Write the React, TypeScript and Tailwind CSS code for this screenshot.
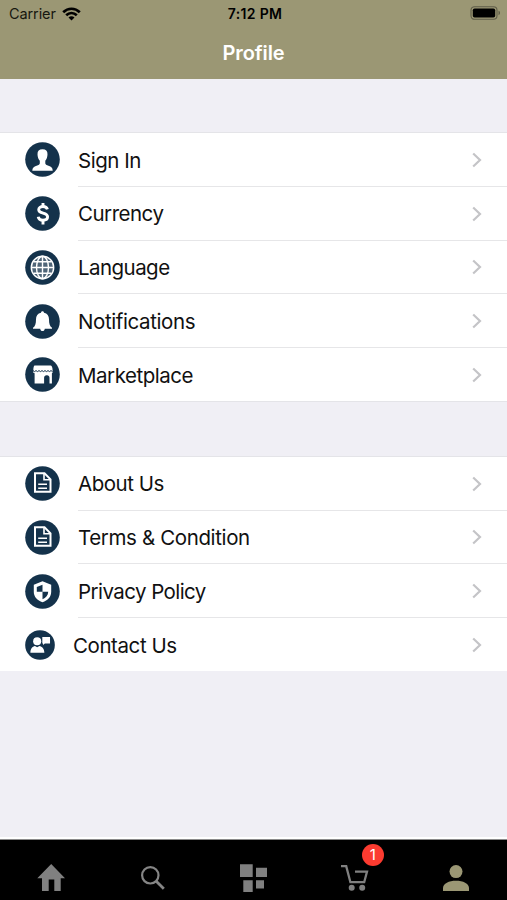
import React from 'react';

interface MenuItem {
    label: string;
    icon: React.ReactNode;
    compact?: boolean;
    tracking: string;
}

const NAVY = '#14324b';

const Disc = ({ children }: { children: React.ReactNode }) => (
    <svg viewBox="0 0 35 35" className="block h-full w-full" fill="none">
        <circle cx="17.5" cy="17.5" r="17.3" fill={NAVY} />
        {children}
    </svg>
);

const SignInIcon = () => (
    <Disc>
        <path
            fill="#fff"
            d="M17.5 7.2c3.4 0 5.1 1.8 5 5 0 2.500-.9 5-2.200 6.600v2.500c0 1.300 1.200 1.900 3.200 2.500 2.800.8 4.200 2 4.200 5h-20.400c.1-3 1.500-4.200 4.300-5 2-.6 3.200-1.200 3.200-2.500v-2.500c-1.400-1.600-2.300-4.100-2.300-6.600-.1-3.200 1.600-5 5-5z"
        />
    </Disc>
);

const CurrencyIcon = () => (
    <Disc>
        <g stroke="#fff" strokeWidth="2.9">
            <path d="M22.4 13.4c-.5-1.900-2-2.900-4.400-2.900-2.500 0-4.300 1.200-4.300 3.200 0 2.100 1.600 2.700 4.400 3.400 2.900.7 4.500 1.600 4.500 3.700 0 2.200-1.800 3.400-4.600 3.400-2.700 0-4.400-1.200-4.800-3.500" />
            <path d="M18 7v3.500M18 24.500v4" />
        </g>
    </Disc>
);

const LanguageIcon = () => (
    <Disc>
        <g stroke="#fff" strokeWidth="1.4">
            <circle cx="17.5" cy="17.5" r="11.2" fill="#fff" fillOpacity="0.25" />
            <ellipse cx="17.5" cy="17.5" rx="6" ry="11.2" />
            <path d="M17.5 6.3v22.400M6.300 17.500h22.400M8.500 11.800h18M8.500 23.200h18" />
        </g>
    </Disc>
);

const BellIcon = () => (
    <Disc>
        <path
            fill="#fff"
            d="M17.500 7.200c.9 0 1.500.6 1.500 1.500 3.300.7 5 3.100 5 6.500 0 4.500.7 6.900 3 8.600v1h-7.200c-.2 1.500-1.100 2.300-2.300 2.300s-2.100-.8-2.300-2.300H8v-1c2.300-1.700 3-4.100 3-8.600 0-3.400 1.700-5.800 5-6.500 0-.9.6-1.500 1.500-1.500z"
        />
    </Disc>
);

const StoreIcon = () => (
    <Disc>
        <path
            fill="#fff"
            d="M9.800 8.400h15.800c1 0 2 1.800 2 5v2.400l-.7.400v10.200h-2.400v-5.700c0-1.500-1-2.400-2.400-2.400h-.6c-1.400 0-2.400.9-2.400 2.400v5.700H9.600V16.200l-1.300-.4v-2.400c0-3 .5-5 1.500-5z"
        />
        <path
            stroke={NAVY}
            strokeWidth="1"
            d="M8 13.600l1.500 1 1.500-1 1.500 1 1.500-1 1.500 1 1.500-1 1.500 1 1.500-1 1.500 1 1.500-1 1.500 1 1.500-1 1.500 1"
        />
    </Disc>
);

const DocumentIcon = () => (
    <Disc>
        <g stroke="#fff" strokeWidth="2">
            <path d="M10 7.300h9.500l6 6v12.500H10z" />
            <path strokeWidth="1.600" d="M19 7.300v6.500h6.500M13.200 18.200h8.800M13.200 22.200h8.800" />
        </g>
    </Disc>
);

const PrivacyIcon = () => (
    <Disc>
        <path fill="#fff" d="M17.500 7.300l8.700 3.400v7c0 5.300-3.500 8.600-8.700 10.600-5.200-2-8.700-5.300-8.700-10.600v-7z" />
        <path fill={NAVY} d="M17.500 10.800v7h-5.700v-4.800zM17.500 17.800h5.700c0 3.600-2.300 6-5.700 7.400z" />
    </Disc>
);

const ContactIcon = () => (
    <Disc>
        <g fill="#fff">
            <circle cx="14.200" cy="13.200" r="4.700" />
            <path d="M6.300 26.600c0-4.800 2.400-7.600 5.300-8l2.600 1.600 2.600-1.600c3.100.4 5.800 3.200 5.800 8z" />
            <path d="M20.200 8.200h9v7.600h-6l-2.200 1.700V15.800h-.8z" />
        </g>
    </Disc>
);

const accountItems: MenuItem[] = [
    { label: 'Sign In', icon: <SignInIcon />, tracking: 'tracking-[-0.45px]' },
    { label: 'Currency', icon: <CurrencyIcon />, tracking: 'tracking-[-0.5px]' },
    { label: 'Language', icon: <LanguageIcon />, tracking: 'tracking-[-0.55px]' },
    { label: 'Notifications', icon: <BellIcon />, tracking: 'tracking-[-0.4px]' },
    { label: 'Marketplace', icon: <StoreIcon />, tracking: 'tracking-[-0.48px]' },
];

const infoItems: MenuItem[] = [
    { label: 'About Us', icon: <DocumentIcon />, tracking: 'tracking-[-0.47px]' },
    { label: 'Terms & Condition', icon: <DocumentIcon />, tracking: 'tracking-[-0.37px]' },
    { label: 'Privacy Policy', icon: <PrivacyIcon />, tracking: 'tracking-[-0.56px]' },
    { label: 'Contact Us', icon: <ContactIcon />, compact: true, tracking: 'tracking-[-0.42px]' },
];

const StatusBar = () => (
    <div className="grid h-7 grid-cols-3 items-center pl-[9px] pr-[6px] text-[#17170f]">
        <div className="flex items-center gap-[6px]">
            <span className="text-[14.5px] tracking-[-0.1px]">Carrier</span>
            <svg viewBox="0 0 19 14" className="-mt-px h-[14px] w-[19px]" fill="none" stroke="#000" strokeWidth="2.7">
                <path d="M1.200 5.200c4.800-4.600 11.800-4.600 16.600 0M4.200 8.300c3.100-2.900 7.500-2.900 10.600 0" />
                <path fill="#000" stroke="none" d="M9.500 13.500l-3-3c1.700-1.600 4.300-1.600 6 0z" />
            </svg>
        </div>
        <span className="-mt-px whitespace-nowrap text-center text-[14px] font-semibold tracking-[0.35px] text-black">7:12 PM</span>
        <svg viewBox="0 0 31 14" className="-mt-[2px] h-[14px] w-[31px] justify-self-end">
            <rect x="1" y="0.7" width="26" height="12.6" rx="3.5" fill="none" stroke="#5f5d48" strokeWidth="1.1" />
            <rect x="2.8" y="2.5" width="22.4" height="9" rx="1.8" />
            <path fill="#5f5d48" d="M28.500 4.800c2 .6 2 3.800 0 4.400z" />
        </svg>
    </div>
);

const MenuSection = ({ items }: { items: MenuItem[] }) => (
    <ul className="bg-white">
        {items.map((item, index) => (
            <li key={item.label} className="flex h-[53.75px] items-center pl-[25px] last:h-[52.75px] last:pt-px">
                <div className={item.compact ? 'size-[30px]' : 'size-[35px]'}>{item.icon}</div>
                <div
                    className={`ml-[18px] flex h-full flex-1 items-center justify-between pr-[25px] ${
                        index < items.length - 1 ? 'border-b border-[#e6e6e8]' : ''
                    }`}
                >
                    <span className={`pt-[3px] text-[20.5px] text-[#111] ${item.tracking}`}>{item.label}</span>
                    <svg viewBox="0 0 10 16" className="mt-px h-4 w-[10px]" fill="none" stroke="#c4c4c7" strokeWidth="2.2">
                        <path d="M1.200 1.500L8 8l-6.800 6.500" />
                    </svg>
                </div>
            </li>
        ))}
    </ul>
);

const TabBar = () => (
    <nav className="grid h-[60px] grid-cols-5 items-end justify-items-center bg-black pb-[8px]">
        <svg viewBox="0 0 28 28" className="size-7" fill="#808080">
            <path d="M14.200 0L28 14.300h-4.300V27h-6.400V15.600h-5.600V27H5V14.300H.3z" />
        </svg>
        <svg viewBox="0 0 28 28" className="size-7" fill="none" stroke="#858585" strokeWidth="2.2">
            <circle cx="12.300" cy="11.300" r="8.200" />
            <path strokeWidth="2.8" d="M18 17l7.800 7.800" />
        </svg>
        <svg viewBox="0 0 28 28" className="size-7" fill="#808080">
            <path d="M1 .3h12.700V13H1zM17 3.700h11V13H17zM4.300 16.300h9.400V28H4.300zM17 16.300h8v8.200h-8z" />
        </svg>
        <div className="relative size-7">
            <svg viewBox="0 0 28 28" className="size-7" fill="none" stroke="#808080" strokeWidth="2.3">
                <path d="M0 2.200h5.200l4.200 16h13.800L26 7.700H14" />
                <circle cx="10.700" cy="23.800" r="3" fill="#808080" stroke="none" />
                <circle cx="21.200" cy="23.800" r="3" fill="#808080" stroke="none" />
            </svg>
            <span className="absolute -top-5 left-[21px] flex size-[22px] items-center justify-center rounded-full bg-[#fc3b30] text-[15px] text-white">
                1
            </span>
        </div>
        <svg viewBox="0 0 28 28" className="size-7" fill="#9b9774">
            <circle cx="14" cy="7.6" r="6.5" />
            <path d="M1 27v-3c0-4.600 6-7.300 13-7.300S27 19.400 27 24v3z" />
        </svg>
    </nav>
);

const App: React.FC = () => {
    return (
        <div className="flex h-[900px] w-[507px] flex-col overflow-hidden bg-[#f0eff5] font-['Inter','Liberation_Sans',sans-serif]">
            <header className="h-[79px] bg-[#9b9774]">
                <StatusBar />
                <h1 className="mt-[9px] text-center text-[20px] font-semibold leading-[32px] tracking-[-0.1px] text-white">Profile</h1>
            </header>
            <main className="flex-1">
                <div className="h-[54px] border-b border-[#e4e4e8]" />
                <MenuSection items={accountItems} />
                <div className="h-[56px] border-y border-[#e4e4e8]" />
                <MenuSection items={infoItems} />
            </main>
            <div className="h-[3px] border-b border-[#8a8a8a] bg-white" />
            <TabBar />
        </div>
    );
};

export default App;
